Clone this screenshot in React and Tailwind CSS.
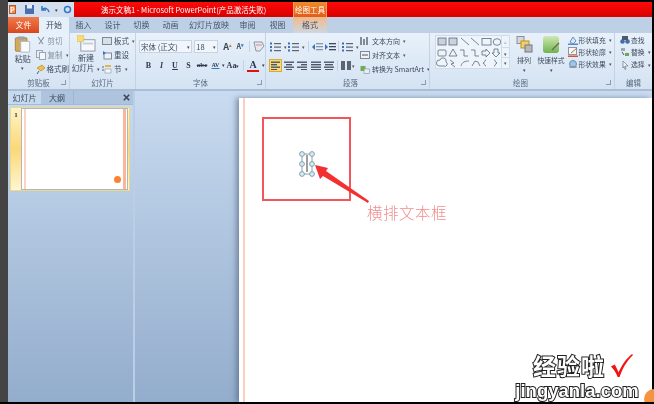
import React from 'react';

const Car = () => <span className="text-[#555] text-[5px] ml-[3px]">▾</span>;

const Line = ({ children, className = '' }) => (
  <div className={`flex items-center h-[14px] whitespace-nowrap ${className}`}>{children}</div>
);

const Ico = ({ children, w = 10, h = 10, className = '' }) => (
  <svg width={w} height={h} viewBox={`0 0 ${w} ${h}`} className={`shrink-0 ${className}`}>{children}</svg>
);

const Bars = ({ dots, w = 11 }) => (
  <Ico w={w} h={10}>
    {[1.5, 5, 8.5].map((y) => (
      <g key={y}>
        {dots && <rect x="0" y={y - 1} width="2" height="2" fill="#3b6fb0" />}
        <rect x={dots ? 4 : 0} y={y - 0.5} width={dots ? 7 : w} height="1.2" fill="#5a6472" />
      </g>
    ))}
  </Ico>
);

const Indent = ({ back }) => (
  <Ico w={11} h={10}>
    {[1, 4, 7].map((y) => <rect key={y} x="4" y={y} width="7" height="1.3" fill={back ? '#8a96a5' : '#3f4a58'} />)}
    <path d={back ? 'M3 2v6L0 5z' : 'M0 2v6l3-3z'} fill="#2f78c4" />
  </Ico>
);

const Group = ({ w, label, launcher = true, labelClass = '', children }) => (
  <div className="flex flex-col border-r border-[#c3d2e4] shrink-0" style={{ width: w }}>
    <div className="h-[44px] flex overflow-hidden">{children}</div>
    <div className="h-[12px] relative flex items-center justify-center text-[7.5px] text-[#5a6b80]">
      <span className={labelClass}>{label}</span>
      {launcher && <span className="absolute right-[3px] top-[3px] w-[5px] h-[5px] border-r border-b border-[#8a9ab0]" />}
    </div>
  </div>
);

const Tab = ({ w, children, className = 'text-[#44546a]' }) => (
  <div className={`h-full flex items-center justify-center text-[8px] shrink-0 ${className}`} style={{ width: w }}>{children}</div>
);

const Clipboard = () => (
  <Group w={62} label="剪贴板">
    <div className="w-[27px] pl-[3px] flex flex-col items-center pt-[3px] text-[8px] text-[#3d4a5c]">
      <svg width="17" height="17" viewBox="0 0 18 19">
        <rect x="1" y="2" width="13" height="15" rx="1" fill="#d3a95c" stroke="#a57f3f" />
        <rect x="4" y="0.5" width="7" height="3.5" fill="#9aa3ad" />
        <path d="M7 6h10v12H7z" fill="#fbfbfb" stroke="#a9b4c2" />
      </svg>
      <span className="mt-[1px] leading-[10px]">粘贴</span>
      <span className="text-[5px] leading-[8px]">▾</span>
    </div>
    <div className="flex-1 flex flex-col pt-[1px] pl-[1px] text-[7.5px] text-[#8793a3]">
      <Line><Ico><path d="M2 1l5 7M8 1L3 8" stroke="#8b97a6" strokeWidth="1.2" /></Ico><span className="ml-[2px]">剪切</span></Line>
      <Line><Ico><rect x="0.5" y="0.5" width="6" height="7" fill="#e8edf3" stroke="#99a5b4" /><rect x="3.5" y="2.5" width="6" height="7" fill="#f4f6f9" stroke="#99a5b4" /></Ico><span className="ml-[2px]">复制</span><Car /></Line>
      <Line className="text-[#3d4a5c]"><Ico><path d="M1 4l5-3 3 3-4 3z" fill="#eec24a" stroke="#a67f1c" strokeWidth=".6" /><path d="M3 7l-2 3" stroke="#556" /></Ico><span className="ml-[1px]">格式刷</span></Line>
    </div>
  </Group>
);

const Slides = () => (
  <Group w={66} label="幻灯片" launcher={false}>
    <div className="w-[31px] flex flex-col items-center pt-[2px] text-[8px] leading-[10px] text-[#3d4a5c] ml-[1px]">
      <svg width="19" height="17" viewBox="0 0 20 18" className="mb-[1px]">
        <rect x="4" y="5" width="15" height="12" fill="#f7f8fa" stroke="#8e99a8" />
        <rect x="6" y="8" width="11" height="2" fill="#c5ced9" />
        <rect x="0" y="0" width="7" height="7" fill="#f6dc7a" stroke="#e0b93d" strokeDasharray="1.5 1" />
      </svg>
      <span>新建</span>
      <span className="whitespace-nowrap text-[7.5px]">幻灯片<Car /></span>
    </div>
    <div className="flex flex-col pt-[1px] pl-[1px] text-[7.5px] text-[#3d4a5c]">
      <Line><Ico><rect x="0.5" y="1.5" width="9" height="7" fill="#d7dfe9" stroke="#7d8998" /></Ico><span className="ml-[2px]">板式</span><Car /></Line>
      <Line><Ico><rect x="2" y="3" width="7.5" height="6" fill="#eef2f6" stroke="#7d8998" /><path d="M1 1l3 2-3 2z" fill="#2f78c4" /></Ico><span className="ml-[2px]">重设</span></Line>
      <Line><Ico><rect x="3" y="1" width="6" height="2" fill="#e6b54a" /><rect x="3" y="5" width="6" height="4" fill="#f4f6f9" stroke="#8a96a5" strokeWidth=".6" /><path d="M0 3h2M0 6h2" stroke="#5a6472" /></Ico><span className="ml-[2px]">节</span><Car /></Line>
    </div>
  </Group>
);

const Font = () => (
  <Group w={130} label="字体">
    <div className="flex flex-col w-full pl-[3px]">
      <div className="flex items-center h-[13px] mt-[7px] gap-[2px] text-[#3d4a5c]">
        <div className="w-[56px] h-[13px] bg-[#f1f6fc] border border-[#c6d4e5] text-[7.5px] flex items-center justify-between px-[1px] whitespace-nowrap">
          <span>宋体 (正文)</span><span className="text-[5px]">▾</span>
        </div>
        <div className="w-[25px] h-[13px] bg-[#f1f6fc] border border-[#c6d4e5] text-[7.5px] flex items-center justify-between px-[1px]">
          <span>18</span><span className="text-[5px]">▾</span>
        </div>
        <span className="ml-[3px] font-bold text-[9px] w-[12px]">A<sup className="text-[#c47a2c] text-[5px]">▴</sup></span>
        <span className="font-bold text-[7px] w-[10px]">A<sup className="text-[#2f78c4] text-[5px]">▾</sup></span>
        <span className="w-px h-[11px] bg-[#c3d2e4] ml-[1px]" />
        <Ico w={12} h={11} className="ml-[1px]"><path d="M1 1h8l2 4-4 5H3z" fill="#e5e9ee" stroke="#8c97a5" /><path d="M3 4h6" stroke="#d38a88" /></Ico>
      </div>
      <div className="flex items-center h-[13px] mt-[6px] text-[8px] text-[#2f3b4b] font-bold [font-family:'Liberation_Serif',serif]">
        <span className="w-[13px] ml-[3px] text-center">B</span>
        <span className="w-[13px] text-center italic">I</span>
        <span className="w-[14px] text-center underline">U</span>
        <span className="w-[13px] text-center">S</span>
        <span className="w-[14px] text-center line-through text-[7px]">abc</span>
        <span className="w-[13px] text-center text-[6px] underline decoration-[#2f78c4]">AV</span>
        <span className="w-[4px] text-[5px] font-normal">▾</span>
        <span className="w-[14px] text-center text-[8px]">Aa<span className="text-[5px] font-normal">▾</span></span>
        <span className="w-px h-[11px] bg-[#c3d2e4] mx-[3px]" />
        <span className="w-[12px] text-center text-[10px] leading-[10px] text-[#2a3a55] border-b-2 border-[#e01010]">A</span>
        <span className="ml-[3px] text-[5px] font-normal">▾</span>
      </div>
    </div>
  </Group>
);

const Align = ({ rows, active }) => (
  <span className={`w-[13.3px] h-[13px] flex items-center justify-center shrink-0 ${active ? 'bg-[#f8d878] border border-[#d9a93a]' : ''}`}>
    <Ico w={10} h={9}>{rows.map((r, i) => <rect key={i} x={r[0]} y={i * 2.5 + 0.5} width={r[1]} height="1.4" fill="#4c5766" />)}</Ico>
  </span>
);

const Paragraph = () => (
  <Group w={164} label="段落" labelClass="ml-[6px]">
    <div className="flex flex-col w-[93px] pl-[3px] shrink-0">
      <div className="flex items-center h-[13px] mt-[7px] text-[#3d4a5c]">
        <span className="ml-[1px] flex items-center"><Bars dots /><Car /></span>
        <span className="ml-[1px] flex items-center"><Bars dots /><Car /></span>
        <span className="w-px h-[11px] bg-[#c3d2e4] ml-[3px]" />
        <span className="ml-[3px]"><Indent back /></span>
        <span className="ml-[2px]"><Indent /></span>
        <span className="w-px h-[11px] bg-[#c3d2e4] ml-[2px]" />
        <span className="ml-[3px] flex items-center"><Bars dots /><Car /></span>
      </div>
      <div className="flex items-center h-[13px] mt-[6px]">
        <Align active rows={[[0, 9], [0, 6], [0, 9], [0, 6]]} />
        <Align rows={[[0, 10], [2, 6], [0, 10], [2, 6]]} />
        <Align rows={[[0, 10], [4, 6], [0, 10], [4, 6]]} />
        <Align rows={[[0, 10], [0, 10], [0, 10], [0, 10]]} />
        <Align rows={[[0, 10], [1, 8], [0, 10], [1, 8]]} />
        <span className="w-px h-[11px] bg-[#c3d2e4] mx-[2px]" />
        <span className="ml-[1px] flex"><Ico w={10} h={9}><rect x="0" y="0" width="4" height="9" fill="#5a6472" /><rect x="6" y="0" width="4" height="9" fill="#5a6472" /></Ico></span>
        <span className="text-[5px] text-[#555] ml-[1px]">▾</span>
      </div>
    </div>
    <div className="flex flex-col pt-[1px] pl-[1px] text-[7px] text-[#3d4a5c] min-w-0">
      <Line><Ico><path d="M1 9V1M4 9V3M7 9V1" stroke="#4c5766" strokeWidth="1.3" /></Ico><span className="ml-[2px]">文本方向</span><Car /></Line>
      <Line><Ico><rect x="0.5" y="1.5" width="9" height="7" fill="#eef2f6" stroke="#7d8998" /><path d="M2 5h6" stroke="#4c5766" /></Ico><span className="ml-[2px]">对齐文本</span><Car /></Line>
      <Line><Ico><rect x="0.5" y="2" width="5" height="5" fill="#6fb04c" /><rect x="4" y="5" width="5.5" height="4.5" fill="#e9eef4" stroke="#7d8998" strokeWidth=".6" /></Ico><span className="ml-[2px]">转换为 SmartArt</span><Car /></Line>
    </div>
  </Group>
);

const Shapes = () => (
  <div className="w-[75px] h-[34px] ml-[5px] mt-[2px] bg-[#eef4fb] border border-[#cfdbe9] flex shrink-0">
    <svg width="65" height="32" viewBox="0 0 65 32" className="shrink-0" fill="none" stroke="#5d6a7a" strokeWidth=".8">
      <rect x="2" y="2" width="8" height="7" fill="#c9d2dd" />
      <rect x="13" y="2" width="8" height="7" fill="#c9d2dd" />
      <path d="M25 2l8 7M35 2l8 7" />
      <rect x="46" y="2.5" width="9" height="6.5" />
      <ellipse cx="61" cy="6" rx="3.8" ry="3.3" />
      <rect x="2" y="14" width="8" height="6" rx="1" />
      <path d="M13 20l4-7 4 7zM24 14h4v6h4M35 14h4v6h4M46 15h4v-2l4 4-4 4v-2h-4zM58 13h4v4h2l-4 4-4-4h2z" />
      <path d="M3 30a3 3 0 0 1 1-6 3 3 0 0 1 6 2 2 2 0 0 1-2 4zM14 24l4 3-3 1 4 3M25 30c1-4 4-5 8-5M36 30l3-5 3 1 2 4M50 24c-2 0-1 3-3 3 2 0 1 3 3 3M58 24c2 0 1 3 3 3-2 0-1 3-3 3" />
    </svg>
    <div className="flex-1 flex flex-col border-l border-[#cfdbe9] text-[5px] text-[#555] text-center">
      <span className="h-[11px] leading-[11px] text-[#b3bfcd]">▴</span>
      <span className="h-[11px] leading-[11px] border-y border-[#cfdbe9]">▾</span>
      <span className="h-[10px] leading-[10px]">▾</span>
    </div>
  </div>
);

const Drawing = () => (
  <Group w={185} label="绘图" labelClass="mr-[3px]">
    <Shapes />
    <div className="w-[26px] ml-[1px] flex flex-col items-center pt-[3px] text-[7px] text-[#3d4a5c] shrink-0">
      <svg width="17" height="17" viewBox="0 0 17 17">
        <rect x="1" y="0.5" width="7" height="7" fill="#d6d8dc" stroke="#8a8f96" />
        <rect x="5" y="5" width="8" height="7" fill="#f4cf62" stroke="#b99026" />
        <rect x="9" y="9" width="7" height="7" fill="#b5b9bf" stroke="#73787f" />
      </svg>
      <span className="mt-[2px] leading-[10px]">排列</span>
      <span className="text-[5px] leading-[8px] mt-[1px]">▾</span>
    </div>
    <div className="w-[28px] flex flex-col items-center pt-[3px] text-[6.8px] text-[#3d4a5c] shrink-0">
      <svg width="17" height="17" viewBox="0 0 17 17">
        <defs><linearGradient id="g" x1="0" y1="0" x2="0" y2="1"><stop offset="0" stopColor="#cfe8b4" /><stop offset="1" stopColor="#6fb34f" /></linearGradient></defs>
        <rect x="0" y="0" width="16" height="17" rx="3" fill="url(#g)" />
        <path d="M9 14l7-7" stroke="#7a6a4c" strokeWidth="1.5" />
      </svg>
      <span className="mt-[2px] leading-[10px] whitespace-nowrap">快速样式</span>
      <span className="text-[5px] leading-[8px] mt-[1px]">▾</span>
    </div>
    <div className="flex flex-col pt-[1px] text-[6.8px] text-[#3d4a5c] ml-[3px] min-w-0">
      <div className="flex items-center h-[12px] whitespace-nowrap"><Ico><path d="M2 7l3-5 3 4-3 3z" fill="#dfe6ee" stroke="#5f8fc4" /><rect y="8.5" width="10" height="1.5" fill="#4f8bd0" /></Ico><span className="ml-[0.5px]">形状填充</span><Car /></div>
      <div className="flex items-center h-[12px] whitespace-nowrap"><Ico><rect x="0.5" y="0.5" width="8" height="7" fill="#f4f6f9" stroke="#8a96a5" /><path d="M3 6l6-5" stroke="#c2701f" /><rect y="8.5" width="10" height="1.5" fill="#d9542a" /></Ico><span className="ml-[0.5px]">形状轮廓</span><Car /></div>
      <div className="flex items-center h-[12px] whitespace-nowrap"><Ico><circle cx="5" cy="5" r="3.5" fill="#9ec2e8" stroke="#6a90bb" /><ellipse cx="5" cy="8" rx="4" ry="1" fill="#8a96a5" /></Ico><span className="ml-[0.5px]">形状效果</span><Car /></div>
    </div>
  </Group>
);

const Editing = () => (
  <div className="flex flex-col flex-1 min-w-0">
    <div className="h-[44px] flex flex-col pt-[1px] pl-[5px] text-[6.8px] text-[#3d4a5c]">
      <div className="flex items-center h-[12px] whitespace-nowrap"><Ico><circle cx="2.5" cy="6.5" r="2.3" fill="#3f6ea8" /><circle cx="7.5" cy="6.5" r="2.3" fill="#3f6ea8" /><rect x="2" y="1" width="6" height="4" fill="#4d5a6a" /></Ico><span className="ml-[1px]">查找</span></div>
      <div className="flex items-center h-[12px] whitespace-nowrap"><Ico><path d="M1 1h4v3H1z" fill="#99a8b8" /><path d="M5 6h4v3H5z" fill="#72a653" /><path d="M2 5l2 3" stroke="#4d5a6a" /></Ico><span className="ml-[1px]">替换</span><Car /></div>
      <div className="flex items-center h-[13px] whitespace-nowrap"><Ico><path d="M3 1l5 5H5l1 3-1 .5L4 6.5 3 8z" fill="#f5f7fa" stroke="#6e7a8a" strokeWidth=".7" /></Ico><span className="ml-[1px]">选择</span><Car /></div>
    </div>
    <div className="h-[12px] flex items-center justify-center text-[7.5px] text-[#5a6b80]">编辑</div>
  </div>
);

const LeftPanel = () => (
  <div className="w-[125px] shrink-0 flex flex-col">
    <div className="h-[14px] flex bg-[#aec4de] border-b border-[#a3bad6] text-[8px] text-[#3d4a5c]">
      <div className="w-[33px] flex items-center justify-center bg-[#c6d9ef]">幻灯片</div>
      <div className="w-[33px] flex items-center justify-center border-r border-[#9fb6d2]">大纲</div>
      <div className="flex-1 flex items-center justify-end pr-[3px] text-[#3c4654]">
        <svg width="7" height="7" viewBox="0 0 7 7"><path d="M.8.8l5.4 5.4M6.2.8L.8 6.2" stroke="#3c4654" strokeWidth="1.6" /></svg>
      </div>
    </div>
    <div className="ml-[2px] mt-[2px] w-[120px] h-[84px] flex bg-gradient-to-b from-[#fff3c4] via-[#fbd878] to-[#fff5cf] border border-[#ecd88b]">
      <div className="w-[10px] text-[7px] font-bold text-center leading-[12px] pt-[1px] text-[#333] [font-family:'Liberation_Serif',serif]">1</div>
      <div className="flex-1 mr-[1px] bg-white border border-[#b5b5b5] relative flex justify-between px-[1px]">
        <span className="w-[1.5px] ml-[1px] bg-[#fbd3c6]" />
        <span className="w-[3px] bg-[#f9b699]" />
        <span className="absolute right-[6px] bottom-[6px] w-[7px] h-[7px] rounded-full bg-[#fa8232]" />
      </div>
    </div>
  </div>
);

const SlideCanvas = () => (
  <div className="flex-1 min-w-0 pl-[104px] pt-[7px] flex">
    <div className="flex-1 bg-white shadow-[-3px_0_5px_rgba(70,90,120,0.55)] pl-[4px] relative flex">
      <div className="w-[2px] h-full bg-[#fcd0bf]" />
      <div className="absolute left-[23px] top-[19px] w-[89px] h-[84px] border-2 border-[#f4555a]" />
      <svg width="90" height="60" viewBox="0 0 90 60" className="absolute left-[50px] top-[50px]">
        <g fill="#d4ecf4" stroke="#7d97a8" strokeWidth=".9">
          <path d="M13 6h10v20H13z" fill="none" />
          {[[13, 6], [23, 6], [13, 16], [23, 16], [13, 26], [23, 26]].map(([x, y]) => (
            <circle key={`${x}-${y}`} cx={x} cy={y} r="2.4" />
          ))}
        </g>
        <path d="M18 7v17" stroke="#6b6b6b" strokeWidth="1.3" />
        <path d="M26 17L39 20L37 23L80 53L79 55L34 28L31 31z" fill="#f23030" />
      </svg>
      <div className="absolute left-[128px] top-[104px] text-[15.5px] leading-[20px] tracking-[0.5px] text-[#f28b8b] whitespace-nowrap [font-family:'Noto_Sans_CJK_SC',serif] font-light">横排文本框</div>
    </div>
  </div>
);

const Watermark = () => (
  <div className="absolute left-[510px] top-[352px] w-[134px] flex flex-col items-center font-bold text-white [-webkit-text-stroke:2px_#222] [paint-order:stroke_fill]">
    <div className="flex items-center h-[26px] [font-family:'Noto_Sans_CJK_SC',sans-serif]">
      <span className="text-[23px] leading-[26px] ml-[12px] tracking-[1px]">经验啦</span>
      <svg width="23" height="25" viewBox="0 0 24 26" className="ml-[5px]"><path d="M1 14l4-2 4 8C13 11 17 6 23 1l1 1C17 9 13 16 10 25H8C6 20 4 17 1 14z" fill="#f01414" /></svg>
    </div>
    <div className="mt-[3px] text-[18.5px] leading-[19px] [font-family:'Liberation_Sans',sans-serif]">jingyanla.com</div>
  </div>
);

export default function App() {
  return (
    <div className="w-[654px] h-[404px] bg-black relative overflow-hidden [font-family:'Noto_Sans_CJK_SC','Liberation_Sans',sans-serif]">
      <div className="absolute inset-y-0 left-0 w-[8px] bg-[#444]" />
      <div className="h-[404px] pl-[8px] pr-[2px] py-[2px] flex flex-col [filter:blur(0.55px)]">
        <div className="h-[15px] flex shrink-0">
          <div className="w-[66px] bg-[#d3dfee] flex items-center gap-[3px] pl-[1px] shrink-0">
            <span className="w-[9px] h-[9px] bg-[#ee8a4e] border border-[#b85a23] text-[7px] leading-[8px] text-white text-center font-bold">P</span>
            <Ico w={9} h={9} className="ml-[6px]"><rect width="9" height="9" fill="#4a6fb0" /><rect x="2" y="0" width="5" height="3.5" fill="#e7eef7" /></Ico>
            <Ico w={12} h={9} className="ml-[3px]"><path d="M2 1v4h4M2 5c2-3 6-2 7 2" fill="none" stroke="#2f78c4" strokeWidth="1.5" /></Ico>
            <span className="text-[5px] text-[#333]">▾</span>
            <Ico w={9} h={9} className="ml-[2px]"><circle cx="4.5" cy="4.5" r="3" fill="none" stroke="#2f78c4" strokeWidth="1.5" /></Ico>
            <span className="w-px h-[9px] bg-[#8494a8] ml-[2px]" />
            <span className="text-[5px] text-[#333]">▾</span>
          </div>
          <div className="flex-1 h-full bg-gradient-to-b from-[#ff0a0a] to-[#d80000] flex text-white text-[7.5px]">
            <div className="w-[219px] flex items-center pl-[27px] whitespace-nowrap">演示文稿1 - Microsoft PowerPoint(产品激活失败)</div>
            <div className="w-[34px] flex items-center justify-center bg-gradient-to-b from-[#f08a2c] to-[#e25a18] border-x border-[#f2a560]">绘图工具</div>
          </div>
        </div>
        <div className="h-[16px] flex bg-[#bed0e6] shrink-0">
          <Tab w={31} className="bg-gradient-to-b from-[#f0794a] to-[#d9471b] text-white">文件</Tab>
          <Tab w={30} className="bg-[#e6f0fa] text-[#3d4a5c]">开始</Tab>
          <Tab w={29}>插入</Tab>
          <Tab w={29}>设计</Tab>
          <Tab w={29}>切换</Tab>
          <Tab w={29}>动画</Tab>
          <Tab w={48}>幻灯片放映</Tab>
          <Tab w={29}>审阅</Tab>
          <Tab w={31}>视图</Tab>
          <Tab w={34} className="text-[#44546a] bg-gradient-to-b from-[#f0b98a] to-[#cdd6df]">格式</Tab>
        </div>
        <div className="h-[56px] flex bg-gradient-to-b from-[#e8f1fb] to-[#d4e2f2] shrink-0">
          <Clipboard />
          <Slides />
          <Font />
          <Paragraph />
          <Drawing />
          <Editing />
        </div>
        <div className="h-[2px] bg-[#aabdd6] shrink-0" />
        <div className="flex-1 flex min-h-0 bg-gradient-to-b from-[#c9dbf0] to-[#93adcc]">
          <LeftPanel />
          <div className="w-[2px] bg-[#bccde6] shrink-0" />
          <SlideCanvas />
        </div>
      </div>
      <Watermark />
      <div className="absolute left-[644px] top-[389px] w-[20px] h-[20px] rounded-full bg-[#f5933f]" />
      <div className="absolute left-0 bottom-0 w-full h-[2px] bg-black" />
    </div>
  );
}
